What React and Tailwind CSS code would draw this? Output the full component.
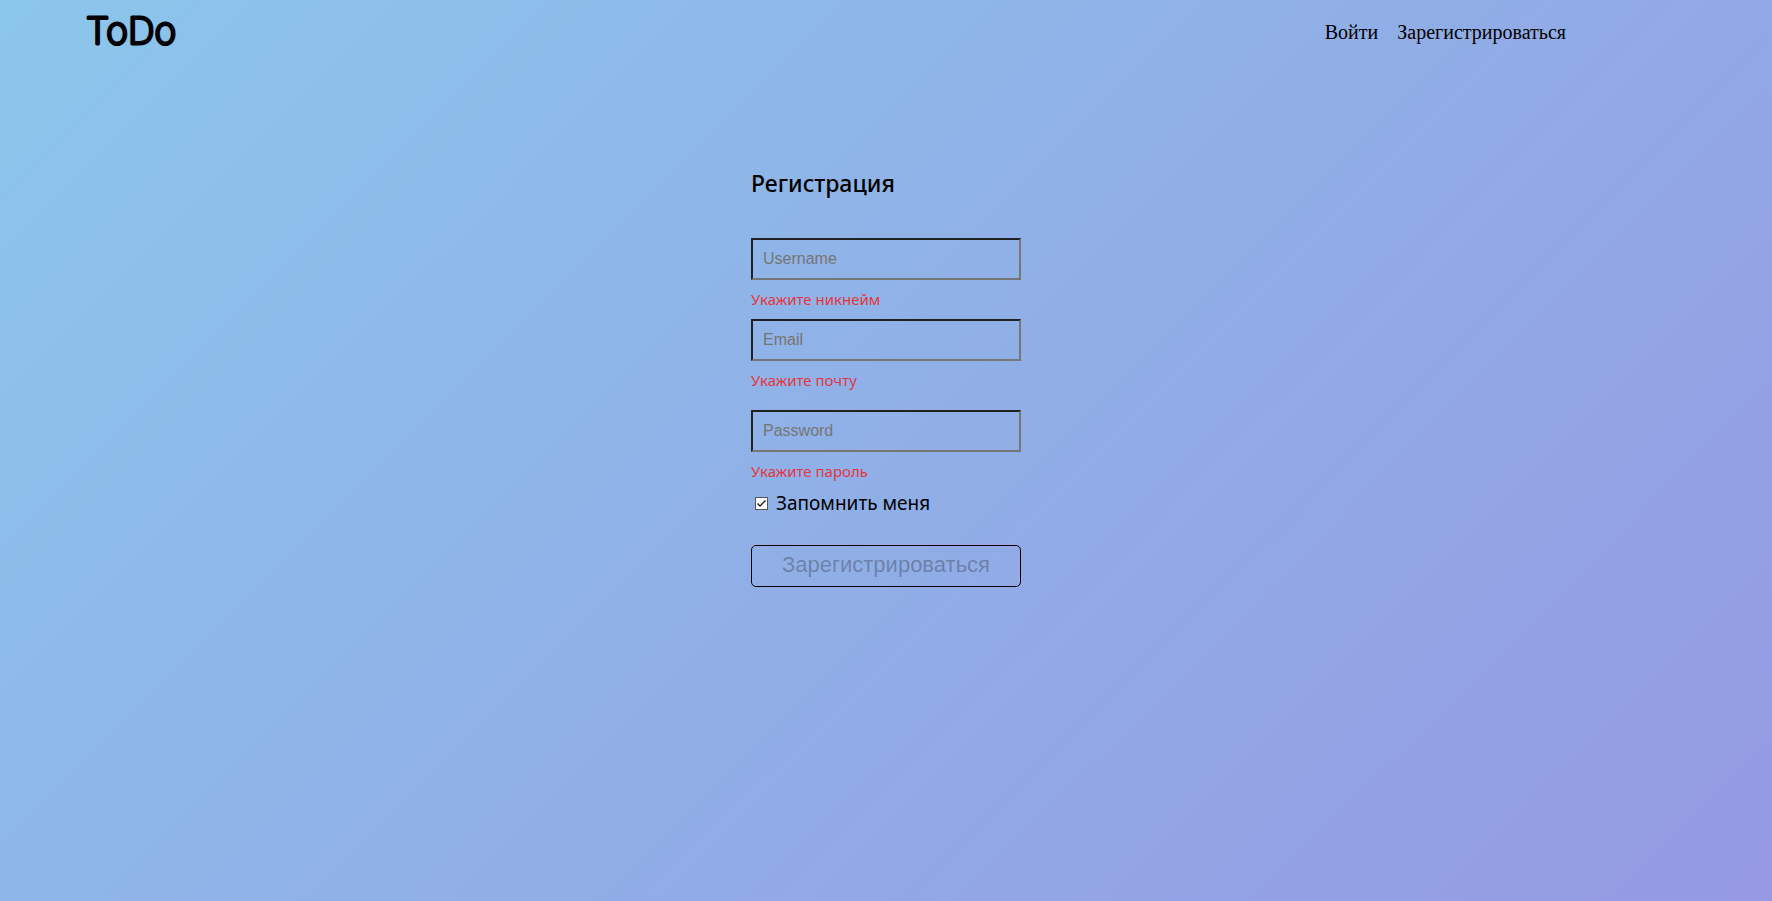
import { useState } from 'react';

const fields = [
  { id: 'username', type: 'text', placeholder: 'Username', error: 'Укажите никнейм', spacing: 'mb-2' },
  { id: 'email', type: 'email', placeholder: 'Email', error: 'Укажите почту', spacing: 'mb-[18px]' },
  { id: 'password', type: 'password', placeholder: 'Password', error: 'Укажите пароль', spacing: 'mb-1' },
];

function Logo() {
  return (
    <svg width="104" height="48" viewBox="0 0 104 48" role="img" aria-label="ToDo">
      <text
        x="0"
        y="36"
        fill="#000"
        stroke="#000"
        strokeWidth="3"
        strokeLinejoin="round"
        strokeLinecap="round"
        className="font-['Inter',sans-serif] text-[37px] font-extralight"
      >
        ToDo
      </text>
    </svg>
  );
}

function Header() {
  return (
    <header className="flex h-16 items-center justify-between pl-[86px] pr-[206px]">
      <a href="#home">
        <Logo />
      </a>
      <nav className="flex gap-[19px] font-['Liberation_Serif',serif] text-xl leading-6">
        <a href="#login">Войти</a>
        <a href="#register">Зарегистрироваться</a>
      </nav>
    </header>
  );
}

function Field({ id, type, placeholder, error, spacing }) {
  return (
    <div className={spacing}>
      <input
        id={id}
        type={type}
        placeholder={placeholder}
        aria-label={placeholder}
        aria-invalid="true"
        aria-describedby={`${id}-error`}
        className="block h-[42px] w-full border-2 border-t-[#212121] border-r-[#767676] border-b-[#767676] border-l-[#212121] bg-transparent px-2.5 font-['Liberation_Sans',sans-serif] text-base outline-none placeholder:text-[#757575]"
      />
      <p id={`${id}-error`} className="mt-2 text-[15px] leading-[23px] text-[#e5353f]">
        {error}
      </p>
    </div>
  );
}

export default function App() {
  const [remember, setRemember] = useState(true);

  return (
    <div className="min-h-screen bg-[linear-gradient(135deg,#8bc6ec_0%,#9599e2_100%)] font-['Noto_Sans',sans-serif] text-black">
      <Header />
      <main className="flex justify-center pt-[103px]">
        <form className="w-[270px]" onSubmit={(e) => e.preventDefault()}>
          <h1 className="mb-[39px] text-[23px] leading-8 font-medium">Регистрация</h1>
          {fields.map((field) => (
            <Field key={field.id} {...field} />
          ))}
          <div className="flex items-center gap-2 pl-1">
            <span className="relative flex size-[13px]">
              <input
                id="remember"
                type="checkbox"
                checked={remember}
                onChange={(e) => setRemember(e.target.checked)}
                className="size-[13px] appearance-none border border-[#555] bg-white"
              />
              {remember && (
                <svg viewBox="0 0 13 13" className="pointer-events-none absolute inset-0" aria-hidden="true">
                  <path d="M2.5 6.5 5 9l5.5-5.5" fill="none" stroke="#222" strokeWidth="1.4" />
                </svg>
              )}
            </span>
            <label htmlFor="remember" className="text-[19px] leading-8">
              Запомнить меня
            </label>
          </div>
          <button
            type="submit"
            disabled
            className="mt-[26px] h-[42px] w-full rounded-[5px] border border-black pb-1 font-['Liberation_Sans',sans-serif] text-[22px] text-[#1010104d]"
          >
            Зарегистрироваться
          </button>
        </form>
      </main>
    </div>
  );
}
